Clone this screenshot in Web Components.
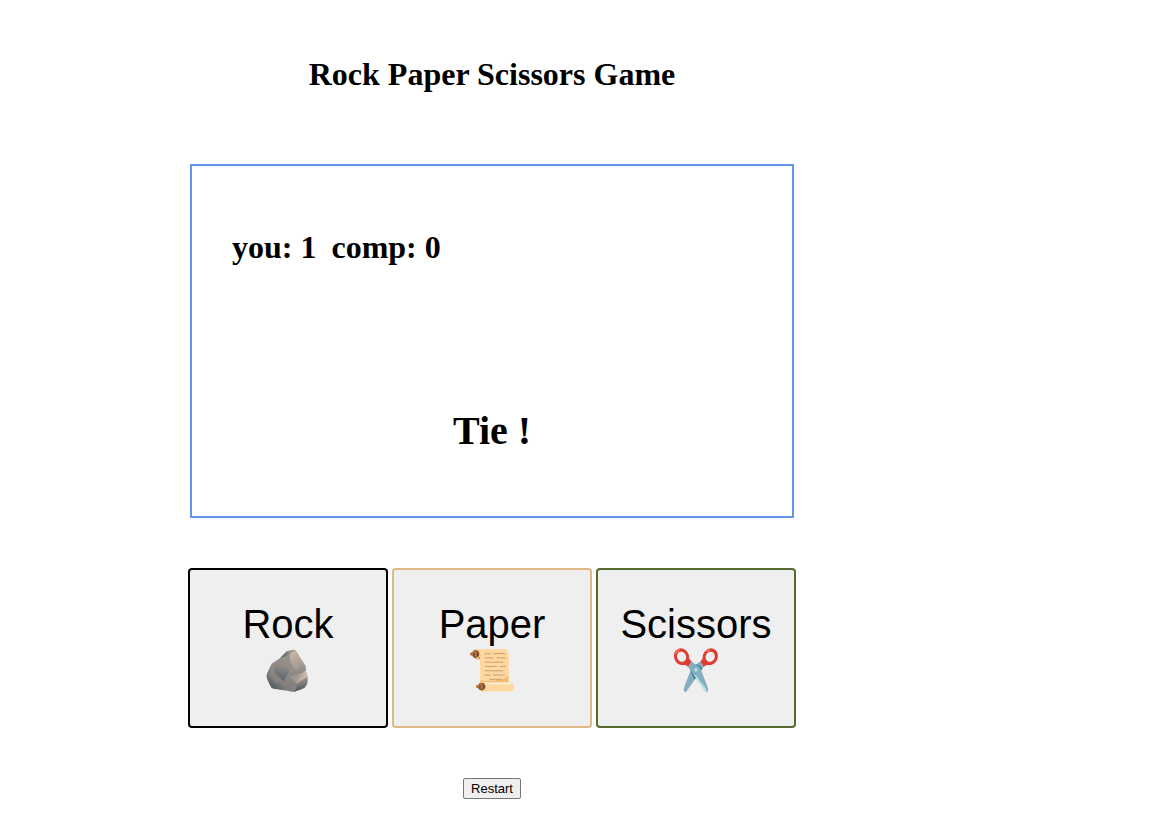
<!DOCTYPE html>
<html lang="en">
<head>
<meta charset="utf-8">
<title>Rock Paper Scissors Game</title>
<style>
body { margin: 0; background: #fff; color: #000; font-family: "Liberation Serif", serif; }
</style>
</head>
<body>
<rps-game></rps-game>
<script>
class RpsChoice extends HTMLElement {
  constructor() {
    super();
    this.attachShadow({ mode: "open" }).innerHTML = `
      <style>
        :host { display: block; }
        button {
          box-sizing: border-box; width: 100%; height: 160px; padding: 0 0 2px;
          border: 2px solid var(--edge, #000); border-radius: 4px;
          background: #efefef; color: #000;
          font: 40px/46px "Liberation Sans", sans-serif;
        }
        span { display: block; }
      </style>
      <button type="button"><span><slot></slot></span><span><slot name="icon"></slot></span></button>`;
  }
}
customElements.define("rps-choice", RpsChoice);

class RpsBoard extends HTMLElement {
  constructor() {
    super();
    this.attachShadow({ mode: "open" }).innerHTML = `
      <style>
        :host { display: flex; flex-direction: column; justify-content: space-between;
          box-sizing: border-box; width: 604px; max-width: 100%; min-height: 354px;
          padding: 62px 40px; border: 2px solid #6495ed; }
        h2 { margin: 0; font-size: 32px; line-height: 38px; display: flex; gap: 15px; }
        p { margin: 0; font-size: 40px; line-height: 46px; font-weight: bold; text-align: center; }
      </style>
      <h2><span>you: 1</span><span>comp: 0</span></h2>
      <p>Tie !</p>`;
  }
}
customElements.define("rps-board", RpsBoard);

class RpsGame extends HTMLElement {
  constructor() {
    super();
    this.attachShadow({ mode: "open" }).innerHTML = `
      <style>
        :host { display: block; padding: 56px 16px 38px; }
        main { display: flex; flex-direction: column; align-items: center; width: calc(100% - 169px); }
        h1 { margin: 0 0 72px; font-size: 32px; line-height: 36px; }
        .choices { display: grid; grid-template-columns: repeat(3, 1fr); gap: 4px;
          width: 608px; max-width: 100%; margin: 50px 0; }
        .restart { box-sizing: border-box; padding: 1px 7px; border: 1px solid #767676; border-radius: 2px;
          background: #efefef; color: #000; font: 13px/17px "Liberation Sans", sans-serif; }
      </style>
      <main>
        <h1>Rock Paper Scissors Game</h1>
        <rps-board></rps-board>
        <div class="choices">
          <rps-choice style="--edge:#000">Rock<span slot="icon">🪨</span></rps-choice>
          <rps-choice style="--edge:#deb887">Paper<span slot="icon">📜</span></rps-choice>
          <rps-choice style="--edge:#556b2f">Scissors<span slot="icon">✂️</span></rps-choice>
        </div>
        <button class="restart" type="button">Restart</button>
      </main>`;
  }
}
customElements.define("rps-game", RpsGame);
</script>
</body>
</html>
